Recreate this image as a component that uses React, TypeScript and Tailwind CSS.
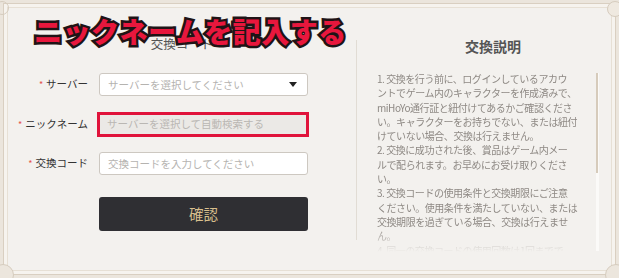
const notes: string[][] = [
  [
    "1. 交換を行う前に、ログインしているアカウ",
    "ントでゲーム内のキャラクターを作成済みで、",
    "miHoYo通行証と紐付けてあるかご確認くださ",
    "い。キャラクターをお持ちでない、または紐付",
    "けていない場合、交換は行えません。",
  ],
  [
    "2. 交換に成功された後、賞品はゲーム内メー",
    "ルで配られます。お早めにお受け取りくださ",
    "い。",
  ],
  [
    "3. 交換コードの使用条件と交換期限にご注意",
    "ください。使用条件を満たしていない、または",
    "交換期限を過ぎている場合、交換は行えませ",
    "ん。",
  ],
  [
    "4. 同一の交換コードの使用回数は1回までで",
    "す。",
  ],
];

function Label({ text }: { text: string }) {
  return (
    <div className="w-[80px] text-right text-[10.5px] leading-none text-[#333] whitespace-nowrap">
      <span className="mr-[3px] text-[9px] text-[#e5544b]">*</span>
      {text}
    </div>
  );
}

export default function App() {
  return (
    <div className="relative w-[619px] h-[278px] overflow-hidden bg-[#ebe5dc] p-[3px] font-['Noto_Sans_CJK_JP',sans-serif]">
      <div className="h-full border border-[#d9cfc1] bg-[#f6f3ee] p-[3px]">
        <div className="flex h-full border border-[#e7e0d5] bg-[#f3f1ee]">
          {/* left: form */}
          <div className="w-[348px] pt-[28px]">
            <div className="text-center text-[12.5px] leading-[16px] text-[#555]">交換コード</div>

            <div className="mt-[21px] flex items-center">
              <Label text="サーバー" />
              <div className="ml-[11px] flex h-[23px] w-[209px] items-center justify-between rounded-[3px] border border-[#cdc8c1] bg-white pl-[8px] pr-[10px]">
                <span className="text-[10.5px] text-[#b5b3b0]">サーバーを選択してください</span>
                <svg width="8" height="5" viewBox="0 0 8 5">
                  <path d="M0 0h8L4 5z" fill="#222" />
                </svg>
              </div>
            </div>

            <div className="mt-[16px] flex items-center">
              <Label text="ニックネーム" />
              <div className="ml-[9px] flex h-[25px] w-[212px] items-center border-[3px] border-[#e0133b] bg-[#ebe9e6] pl-[7px] text-[10.5px] leading-none text-[#bab7b3]">
                サーバーを選択して自動検索する
              </div>
            </div>

            <div className="mt-[15px] flex items-center">
              <Label text="交換コード" />
              <input
                placeholder="交換コードを入力してください"
                className="ml-[11px] h-[23px] w-[209px] rounded-[3px] border border-[#cdc8c1] bg-white pl-[8px] text-[10.5px] outline-none placeholder:text-[#b5b3b0]"
              />
            </div>

            <button className="ml-[91px] mt-[22px] flex h-[34px] w-[209px] items-center justify-center rounded-[3px] bg-[#2f2f33] text-[14.5px] text-[#d8bf8d]">
              確認
            </button>
          </div>

          <div className="mt-[32px] h-[200px] w-px bg-[#e1dcd4]" />

          {/* right: notes */}
          <div className="flex-1 pl-[20px] pt-[29px]">
            <div className="w-[212px] pl-[20px] text-center text-[14px] font-bold leading-[18px] text-[#555]">交換説明</div>
            <div className="mt-[17px] flex">
              <div className="h-[180px] w-[212px] overflow-hidden text-[10px] leading-[14.3px] tracking-[-0.45px] text-[#8e8984] [mask-image:linear-gradient(to_bottom,black_86%,transparent)]">
                {notes.map((p, i) => (
                  <div key={i}>
                    {p.map((line, j) => (
                      <div key={j} className="whitespace-nowrap">{line}</div>
                    ))}
                  </div>
                ))}
              </div>
              <div className="ml-[7px] mt-[1px] h-[178px] w-[3px] bg-[#fbfaf8]">
                <div className="h-[100px] w-[2px] bg-[#d6cbbb]" />
              </div>
            </div>
          </div>
        </div>
      </div>

      {/* corner ornaments */}
      <div className="absolute left-[-5px] top-[1px] h-[14px] w-[14px] rounded-full border border-[#d6ccbe]" />
      <div className="absolute right-[-4px] top-[1px] h-[16px] w-[16px] rounded-full border border-[#d6ccbe] bg-[#efe9e0]" />
      <div className="absolute bottom-[-8px] left-[-8px] h-[22px] w-[22px] rounded-full border border-[#d6ccbe] bg-[#ece6dd]" />
      <div className="absolute bottom-[-8px] right-[-8px] h-[22px] w-[22px] rounded-full border border-[#d6ccbe] bg-[#ece6dd]" />

      {/* annotation overlay */}
      <div className="absolute left-[34px] top-[17px] whitespace-nowrap text-[28px] font-black leading-none tracking-[0.5px] text-[#e8173d] [-webkit-text-stroke:5px_#1f1416] [paint-order:stroke_fill]">
        ニックネームを記入する
      </div>
    </div>
  );
}
